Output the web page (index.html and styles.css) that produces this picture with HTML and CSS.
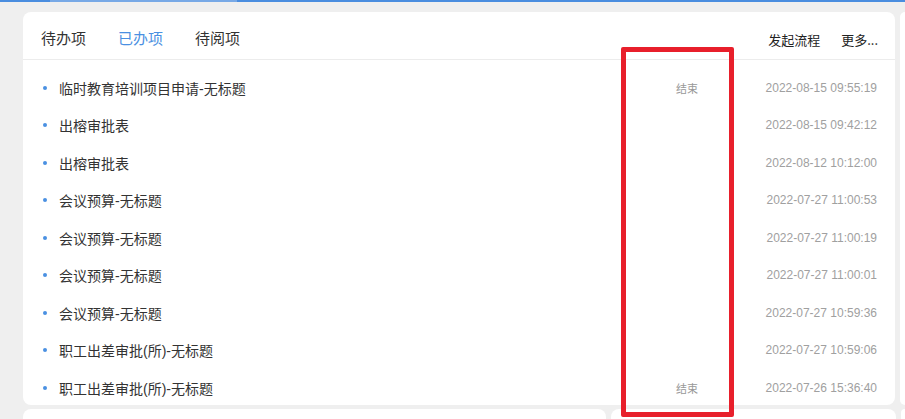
FILE: index.html
```html
<!DOCTYPE html>
<html lang="zh-CN">
<head>
<meta charset="utf-8">
<title>已办项</title>
<link rel="stylesheet" href="styles.css">
</head>
<body>
<div class="topbar"><span class="topbar-seg"></span></div>
<div class="page">
  <div class="row-top">
    <section class="card main-card">
      <header class="card-head">
        <nav class="tabs">
          <span class="tab">待办项</span>
          <span class="tab active">已办项</span>
          <span class="tab">待阅项</span>
        </nav>
        <div class="actions">
          <span class="action">发起流程</span>
          <span class="action">更多...</span>
        </div>
      </header>
      <ul class="list">
        <li class="item"><span class="dot"></span><span class="title">临时教育培训项目申请-无标题</span><span class="status">结束</span><span class="date">2022-08-15 09:55:19</span></li>
        <li class="item"><span class="dot"></span><span class="title">出榕审批表</span><span class="status"></span><span class="date">2022-08-15 09:42:12</span></li>
        <li class="item"><span class="dot"></span><span class="title">出榕审批表</span><span class="status"></span><span class="date">2022-08-12 10:12:00</span></li>
        <li class="item"><span class="dot"></span><span class="title">会议预算-无标题</span><span class="status"></span><span class="date">2022-07-27 11:00:53</span></li>
        <li class="item"><span class="dot"></span><span class="title">会议预算-无标题</span><span class="status"></span><span class="date">2022-07-27 11:00:19</span></li>
        <li class="item"><span class="dot"></span><span class="title">会议预算-无标题</span><span class="status"></span><span class="date">2022-07-27 11:00:01</span></li>
        <li class="item"><span class="dot"></span><span class="title">会议预算-无标题</span><span class="status"></span><span class="date">2022-07-27 10:59:36</span></li>
        <li class="item"><span class="dot"></span><span class="title">职工出差审批(所)-无标题</span><span class="status"></span><span class="date">2022-07-27 10:59:06</span></li>
        <li class="item"><span class="dot"></span><span class="title">职工出差审批(所)-无标题</span><span class="status">结束</span><span class="date">2022-07-26 15:36:40</span></li>
      </ul>
    </section>
    <section class="card side-card"></section>
  </div>
  <div class="row-bottom">
    <section class="card low-left"></section>
    <section class="card low-right"></section>
    <section class="card low-extra"></section>
  </div>
</div>
<div class="highlight"></div>
</body>
</html>
```

FILE: styles.css
```css
html, body {
  margin: 0;
  padding: 0;
}
body {
  width: 905px;
  height: 419px;
  overflow: hidden;
  background: #efefef;
  font-family: "Liberation Sans", "Noto Sans CJK SC", sans-serif;
  position: relative;
}
.topbar {
  height: 2px;
  background: #4a8ddf;
  position: relative;
}
.topbar-seg {
  position: absolute;
  left: 50px;
  width: 187px;
  top: 0;
  height: 2px;
  background: #78a9e6;
}
.page {
  padding: 10px 0 0 23px;
}
.row-top {
  display: flex;
  gap: 5px;
}
.card {
  background: #ffffff;
  border-radius: 8px;
  flex-shrink: 0;
}
.main-card {
  width: 872px;
  height: 393px;
}
.side-card {
  width: 5px;
  height: 393px;
  border-radius: 8px 0 0 8px;
}
.card-head {
  height: 47px;
  border-bottom: 1px solid #ececec;
  display: flex;
  justify-content: space-between;
  padding: 0 17px 0 18px;
}
.tabs {
  display: flex;
  gap: 32px;
  padding-top: 15px;
}
.tab {
  font-size: 15px;
  line-height: 22px;
  color: #333333;
  font-family: "Noto Sans CJK SC", sans-serif;
}
.tab.active {
  color: #4a90e2;
}
.actions {
  display: flex;
  gap: 21px;
  padding-top: 18px;
}
.action {
  font-size: 13px;
  line-height: 20px;
  color: #222222;
  font-family: "Noto Sans CJK SC", sans-serif;
}
.list {
  list-style: none;
  margin: 0;
  padding: 9px 18px 0 20px;
}
.item {
  display: flex;
  align-items: center;
  height: 37.5px;
}
.dot {
  width: 4px;
  height: 4px;
  border-radius: 50%;
  background: #4a90e2;
  margin-right: 12px;
}
.title {
  flex: 1;
  font-size: 14px;
  color: #333333;
  font-family: "Liberation Sans", "Noto Sans CJK SC", sans-serif;
}
.status {
  font-size: 11px;
  color: #999999;
  margin-right: 67px;
  font-family: "Noto Sans CJK SC", sans-serif;
}
.date {
  width: 112px;
  text-align: right;
  font-size: 12px;
  color: #a0a0a0;
}
.row-bottom {
  display: flex;
  gap: 5px;
  margin-top: 4px;
}
.low-left {
  width: 583px;
  height: 10px;
  border-radius: 8px 8px 0 0;
}
.low-right {
  width: 285px;
  height: 10px;
  border-radius: 8px 8px 0 0;
}
.low-extra {
  width: 4px;
  height: 10px;
  border-radius: 8px 0 0 0;
}
.highlight {
  position: absolute;
  left: 621px;
  top: 47px;
  width: 103px;
  height: 360px;
  border: 5px solid #e81f2b;
  border-radius: 2px;
}
```
